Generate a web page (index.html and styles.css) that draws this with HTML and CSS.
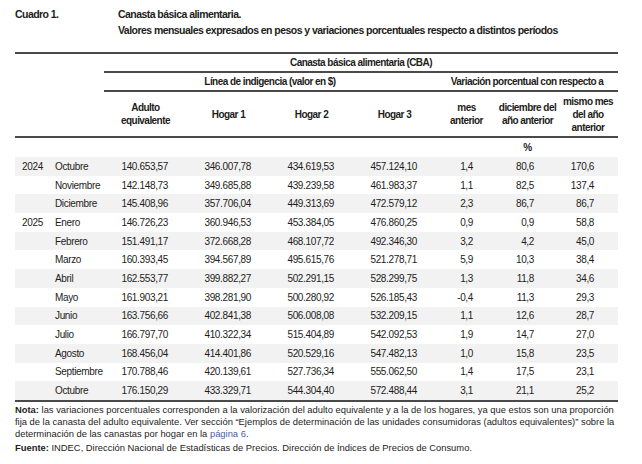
FILE: index.html
```html
<!DOCTYPE html>
<html lang="es">
<head>
<meta charset="utf-8">
<title>Cuadro 1. Canasta básica alimentaria</title>
<link rel="stylesheet" href="styles.css">
</head>
<body>
<div class="page">
  <header class="caption">
    <div class="caption-num">Cuadro 1.</div>
    <div class="caption-text">
      <div>Canasta básica alimentaria.</div>
      <div>Valores mensuales expresados en pesos y variaciones porcentuales respecto a distintos períodos</div>
    </div>
  </header>

  <table class="cba">
    <colgroup>
      <col class="c-year"><col class="c-month">
      <col class="c-val"><col class="c-val"><col class="c-val"><col class="c-val">
      <col class="c-pct"><col class="c-pct"><col class="c-pct3">
    </colgroup>
    <thead>
      <tr class="h1">
        <th class="blank" colspan="2" rowspan="3"></th>
        <th class="ruled" colspan="7">Canasta básica alimentaria (CBA)</th>
      </tr>
      <tr class="h2">
        <th class="ruled" colspan="4">Línea de indigencia (valor en $)</th>
        <th class="ruled" colspan="3">Variación porcentual con respecto a</th>
      </tr>
      <tr class="h3">
        <th>Adulto<br>equivalente</th>
        <th>Hogar 1</th>
        <th>Hogar 2</th>
        <th>Hogar 3</th>
        <th>mes<br>anterior</th>
        <th>diciembre del<br>año anterior</th>
        <th>mismo mes<br>del año<br>anterior</th>
      </tr>
      <tr class="unit">
        <td colspan="7"></td>
        <td class="pct-unit">%</td>
        <td></td>
      </tr>
    </thead>
    <tbody>
      <tr><td class="yr">2024</td><td class="mo">Octubre</td><td>140.653,57</td><td>346.007,78</td><td>434.619,53</td><td>457.124,10</td><td class="p">1,4</td><td class="p">80,6</td><td class="p">170,6</td></tr>
      <tr><td class="yr"></td><td class="mo">Noviembre</td><td>142.148,73</td><td>349.685,88</td><td>439.239,58</td><td>461.983,37</td><td class="p">1,1</td><td class="p">82,5</td><td class="p">137,4</td></tr>
      <tr><td class="yr"></td><td class="mo">Diciembre</td><td>145.408,96</td><td>357.706,04</td><td>449.313,69</td><td>472.579,12</td><td class="p">2,3</td><td class="p">86,7</td><td class="p">86,7</td></tr>
      <tr><td class="yr">2025</td><td class="mo">Enero</td><td>146.726,23</td><td>360.946,53</td><td>453.384,05</td><td>476.860,25</td><td class="p">0,9</td><td class="p">0,9</td><td class="p">58,8</td></tr>
      <tr><td class="yr"></td><td class="mo">Febrero</td><td>151.491,17</td><td>372.668,28</td><td>468.107,72</td><td>492.346,30</td><td class="p">3,2</td><td class="p">4,2</td><td class="p">45,0</td></tr>
      <tr><td class="yr"></td><td class="mo">Marzo</td><td>160.393,45</td><td>394.567,89</td><td>495.615,76</td><td>521.278,71</td><td class="p">5,9</td><td class="p">10,3</td><td class="p">38,4</td></tr>
      <tr><td class="yr"></td><td class="mo">Abril</td><td>162.553,77</td><td>399.882,27</td><td>502.291,15</td><td>528.299,75</td><td class="p">1,3</td><td class="p">11,8</td><td class="p">34,6</td></tr>
      <tr><td class="yr"></td><td class="mo">Mayo</td><td>161.903,21</td><td>398.281,90</td><td>500.280,92</td><td>526.185,43</td><td class="p">-0,4</td><td class="p">11,3</td><td class="p">29,3</td></tr>
      <tr><td class="yr"></td><td class="mo">Junio</td><td>163.756,66</td><td>402.841,38</td><td>506.008,08</td><td>532.209,15</td><td class="p">1,1</td><td class="p">12,6</td><td class="p">28,7</td></tr>
      <tr><td class="yr"></td><td class="mo">Julio</td><td>166.797,70</td><td>410.322,34</td><td>515.404,89</td><td>542.092,53</td><td class="p">1,9</td><td class="p">14,7</td><td class="p">27,0</td></tr>
      <tr><td class="yr"></td><td class="mo">Agosto</td><td>168.456,04</td><td>414.401,86</td><td>520.529,16</td><td>547.482,13</td><td class="p">1,0</td><td class="p">15,8</td><td class="p">23,5</td></tr>
      <tr><td class="yr"></td><td class="mo">Septiembre</td><td>170.788,46</td><td>420.139,61</td><td>527.736,34</td><td>555.062,50</td><td class="p">1,4</td><td class="p">17,5</td><td class="p">23,1</td></tr>
      <tr><td class="yr"></td><td class="mo">Octubre</td><td>176.150,29</td><td>433.329,71</td><td>544.304,40</td><td>572.488,44</td><td class="p">3,1</td><td class="p">21,1</td><td class="p">25,2</td></tr>
    </tbody>
  </table>

  <div class="notes">
    <p><b>Nota:</b> las variaciones porcentuales corresponden a la valorización del adulto equivalente y a la de los hogares, ya que estos son una proporción fija de la canasta del adulto equivalente. Ver sección “Ejemplos de determinación de las unidades consumidoras (adultos equivalentes)” sobre la determinación de las canastas por hogar en la <a class="link" href="#">página 6</a>.</p>
    <p class="source"><b>Fuente:</b> INDEC, Dirección Nacional de Estadísticas de Precios. Dirección de Índices de Precios de Consumo.</p>
  </div>
</div>
</body>
</html>
```

FILE: styles.css
```css
html, body {
  margin: 0;
  padding: 0;
  background: #ffffff;
}

.page {
  padding: 6px 0 0 15px;
  width: 603px;
  color: #1d1d1b;
  font-family: "Liberation Sans", Arial, sans-serif;
}

.caption {
  display: flex;
  font-weight: bold;
  font-size: 10.5px;
  letter-spacing: -0.55px;
  line-height: 16px;
  white-space: nowrap;
}

.caption-num {
  width: 103px;
}

.cba {
  margin-top: 14px;
  width: 603px;
  border-collapse: collapse;
  table-layout: fixed;
  font-size: 10px;
  letter-spacing: -0.35px;
}

.c-year { width: 35px; }
.c-month { width: 54px; }
.c-val { width: 83px; }
.c-pct { width: 61px; }
.c-pct3 { width: 60px; }

.cba thead tr.h1 th {
  border-top: 2px solid #4a4a4a;
}

.cba th {
  font-weight: bold;
  text-align: center;
  padding: 0;
  line-height: 13px;
  letter-spacing: -0.55px;
  white-space: nowrap;
}

.cba th.ruled {
  height: 17px;
  border-bottom: 2px solid #4a4a4a;
}

.cba tr.h3 th,
.cba th.blank {
  border-bottom: 2px solid #4a4a4a;
}

.cba tr.h3 th {
  height: 44px;
}

.cba tr.unit td {
  height: 19px;
  padding: 0;
  text-align: center;
  font-weight: bold;
}

.cba tbody td {
  height: 18.7px;
  padding: 0 19px 0 0;
  text-align: right;
  line-height: 13px;
  white-space: nowrap;
}

.cba tbody td.p {
  padding-right: 24px;
}

.cba tbody td.yr {
  text-align: left;
  padding: 0 0 0 7px;
}

.cba tbody td.mo {
  text-align: left;
  padding: 0 0 0 5px;
}

.cba tbody tr:nth-child(odd) {
  background: #f2f2f2;
}

.cba tbody tr:last-child td {
  border-bottom: 2px solid #4a4a4a;
}

.notes {
  margin-top: 2px;
  font-size: 9.4px;
  line-height: 12px;
}

.notes p {
  margin: 0;
}

.notes .source {
  margin-top: 2px;
}

.link {
  color: #4b5ea8;
  text-decoration: none;
}
```
